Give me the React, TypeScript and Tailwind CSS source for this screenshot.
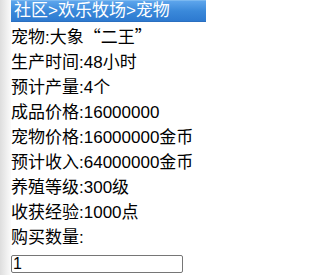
import React from "react";

const cjk = { fontFamily: '"Noto Sans CJK SC", sans-serif' };

export default function App() {
  const rows: React.ReactNode[] = [
    <>
      宠物:大象<span style={cjk}>“</span>二王<span style={cjk}>”</span>
    </>,
    "生产时间:48小时",
    "预计产量:4个",
    "成品价格:16000000",
    "宠物价格:16000000金币",
    "预计收入:64000000金币",
    "养殖等级:300级",
    "收获经验:1000点",
    "购买数量:",
  ];
  return (
    <div
      className="flex w-[206px] h-[275px] overflow-hidden bg-white"
      style={{ fontFamily: '"Liberation Sans", "Noto Sans CJK SC", sans-serif' }}
    >
      <div className="w-[11px] shrink-0 bg-gradient-to-r from-[#dedede] to-[#fbfbfb]" />
      <div className="flex-1 flex flex-col">
        <div className="h-[22px] bg-gradient-to-b from-[#5da5ec] via-[#3a89da] to-[#2d7ad0] border-t border-[#7bb8f0] border-b border-b-[#2a6fc0] text-white text-[17px] leading-[20px] pl-[3px] whitespace-nowrap">
          社区&gt;欢乐牧场&gt;宠物
        </div>
        <div className="flex flex-col pt-[1px] text-[17px] leading-[25px] text-black">
          {rows.map((r, i) => (
            <div key={i} className="whitespace-nowrap">
              {r}
            </div>
          ))}
          <div className="pt-[1px]">
            <input
              defaultValue="1"
              className="w-[172px] h-[18px] border border-[#767676] rounded-[2px] px-[1px] text-[16px] leading-[16px] text-black outline-none"
              style={{ fontFamily: '"Liberation Sans", sans-serif' }}
            />
          </div>
        </div>
      </div>
    </div>
  );
}
